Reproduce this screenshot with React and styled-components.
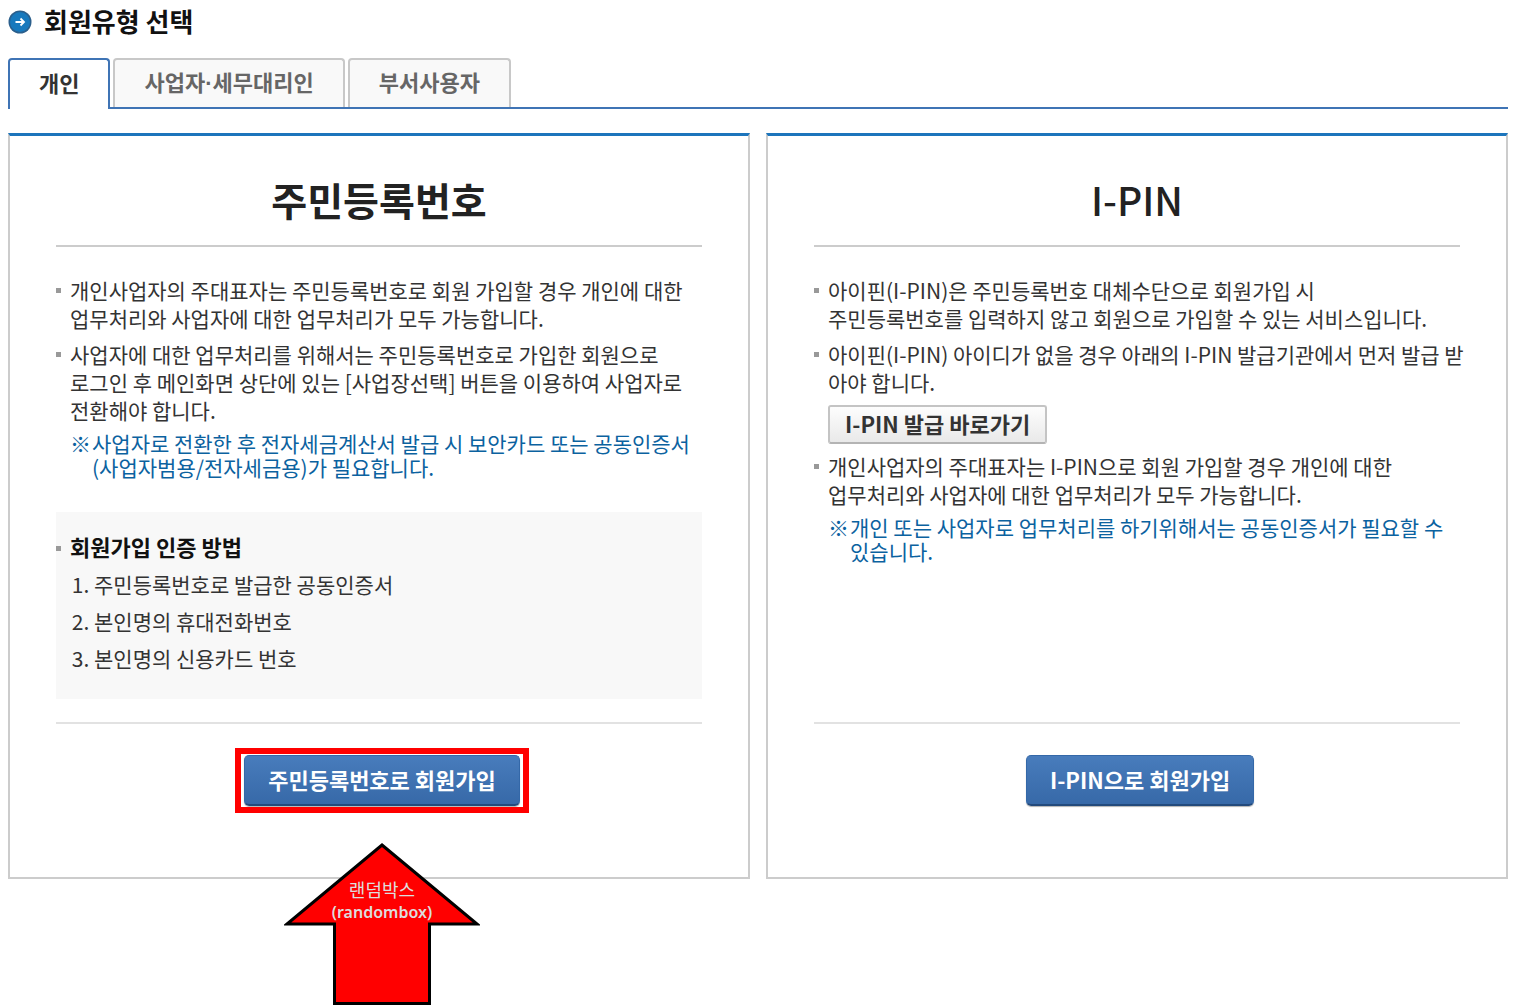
import { useState } from "react";
import styled, { createGlobalStyle } from "styled-components";

const GlobalStyle = createGlobalStyle`
  * {
    box-sizing: border-box;
  }
  body {
    margin: 0;
    background: #fff;
    color: #333;
    font-family: "Noto Sans CJK KR", sans-serif;
    font-size: 21px;
    line-height: 28px;
    word-break: keep-all;
  }
  button {
    font-family: inherit;
    cursor: pointer;
  }
`;

const tabs = ["개인", "사업자·세무대리인", "부서사용자"];

const certMethods = [
  "주민등록번호로 발급한 공동인증서",
  "본인명의 휴대전화번호",
  "본인명의 신용카드 번호",
];

const Page = styled.main`
  min-height: 100vh;
  padding: 6px 10px 0 8px;
`;
const PageTitle = styled.h1`
  display: flex;
  align-items: center;
  gap: 12px;
  height: 32px;
  margin: 0 0 20px;
  color: #111;
  font-size: 26px;
  line-height: 32px;
`;
const PageTitleText = styled.span`
  padding-bottom: 2px;
`;
const TabList = styled.div`
  display: flex;
  gap: 3px;
  height: 51px;
  margin-bottom: 24px;
  box-shadow: inset 0 -2px 0 #3f74b5;
`;
const Tab = styled.button`
  height: ${({ $active }) => ($active ? "51px" : "49px")};
  padding: 0 29px;
  border: 2px solid ${({ $active }) => ($active ? "#3f74b5" : "#c8c8c8")};
  border-bottom: none;
  border-radius: 4px 4px 0 0;
  background: ${({ $active }) => ($active ? "#fff" : "#f9f9f9")};
  color: ${({ $active }) => ($active ? "#333" : "#666")};
  font-family: "Liberation Sans", "Noto Sans CJK KR", sans-serif;
  font-size: 22px;
  font-weight: 700;
  line-height: 28px;
`;
const Cards = styled.div`
  display: grid;
  grid-template-columns: repeat(2, minmax(0, 1fr));
  gap: 16px;
`;
const Card = styled.section`
  display: flex;
  flex-direction: column;
  padding: 32px 46px 71px;
  border: 2px solid #ccc;
  border-top: 3px solid #1c75bc;
`;
const CardTitle = styled.h2`
  margin: 0 0 29px;
  padding: 5px 0 20px;
  border-bottom: 2px solid #ccc;
  color: #222;
  font-size: 39px;
  line-height: 52px;
  text-align: center;
`;
const IpinTitle = styled(CardTitle)`
  font-weight: 500;
`;
const List = styled.ul`
  display: flex;
  flex-direction: column;
  gap: 8px;
  margin: 0;
  padding: 0;
  list-style: none;
`;
const Item = styled.li`
  display: grid;
  grid-template-columns: 5px 1fr;
  column-gap: 9px;
  white-space: nowrap;

  &::before {
    content: "";
    width: 5px;
    height: 5px;
    margin-top: 12px;
    background: #999;
  }
`;
const Note = styled.p`
  display: grid;
  grid-template-columns: 20px 1fr;
  column-gap: 2px;
  margin: 7px 0 0;
  color: #0b62a0;
  line-height: 24px;
`;
const MethodBox = styled.div`
  margin: 33px 0 23px;
  padding: 22px 0;
  background: #f8f8f8;
`;
const MethodTitle = styled.h3`
  margin: 0;
  color: #111;
  font-size: 22px;
  line-height: 24px;
`;
const MethodList = styled.ol`
  margin: 8px 0 0;
  padding: 0 0 0 38px;
  line-height: 37px;
`;
const Footer = styled.div`
  display: flex;
  justify-content: center;
  margin-top: auto;
  padding: 31px 0 0 6px;
  border-top: 2px solid #e2e2e2;
`;
const SmallButton = styled.button`
  display: block;
  height: 39px;
  margin: 9px 0 0;
  padding: 0 15px 3px;
  border: 2px solid #c4c4c4;
  border-bottom-color: #b4b4b4;
  border-radius: 3px;
  background: linear-gradient(#fdfdfd, #e9e9e9);
  color: #333;
  font-size: 22px;
  font-weight: 700;
  line-height: 28px;
`;
const JoinButton = styled.button`
  height: 51px;
  padding: 0 23px 3px;
  border: 1px solid #3468a8;
  border-bottom: 2px solid #234a7c;
  border-radius: 5px;
  background: linear-gradient(#487cbc, #3769a8);
  box-shadow: 0 1px 1px rgba(0, 0, 0, 0.3);
  color: #fff;
  font-size: 22px;
  font-weight: 700;
  line-height: 28px;
`;
const Highlight = styled.div`
  position: relative;

  &::before {
    content: "";
    position: absolute;
    inset: -7px -9px;
    border: 6px solid #f00;
    pointer-events: none;
  }
`;
const Pointer = styled.div`
  position: absolute;
  top: 88px;
  left: 50%;
  width: 196px;
  height: 162px;
  margin-left: -98px;
`;
const PointerLabel = styled.p`
  position: absolute;
  top: 35px;
  left: 0;
  width: 100%;
  margin: 0;
  color: #ddd;
  font-size: 18px;
  line-height: 22px;
  text-align: center;
`;
const LatinName = styled.strong`
  display: block;
  font-family: "Noto Sans", sans-serif;
  font-size: 16px;
  font-weight: 600;
  line-height: 24px;
`;

const ArrowBadge = () => (
  <svg width="24" height="24" viewBox="0 0 24 24" aria-hidden="true">
    <circle cx="12" cy="12" r="11.5" fill="#2b5f8c" />
    <circle cx="12" cy="12" r="10" fill="#1879bd" />
    <path
      d="M7.500 12h8M12.500 8.500l3.500 3.500-3.500 3.500"
      fill="none"
      stroke="#fff"
      strokeWidth="1.8"
    />
  </svg>
);

const UpArrow = () => (
  <svg width="196" height="162" viewBox="0 0 196 162" aria-hidden="true">
    <path
      d="M98 2L193 81H145.500V160.500H50.500V81H3Z"
      fill="#f00"
      stroke="#000"
      strokeWidth="3"
    />
  </svg>
);

function App() {
  const [active, setActive] = useState(0);

  return (
    <Page>
      <GlobalStyle />
      <PageTitle>
        <ArrowBadge />
        <PageTitleText>회원유형 선택</PageTitleText>
      </PageTitle>
      <TabList role="tablist">
        {tabs.map((tab, index) => (
          <Tab
            key={tab}
            type="button"
            role="tab"
            aria-selected={active === index}
            $active={active === index}
            onClick={() => setActive(index)}
          >
            {tab}
          </Tab>
        ))}
      </TabList>
      <Cards>
        <Card>
          <CardTitle>주민등록번호</CardTitle>
          <List>
            <Item>
              <div>
                개인사업자의 주대표자는 주민등록번호로 회원 가입할 경우 개인에
                대한
                <br />
                업무처리와 사업자에 대한 업무처리가 모두 가능합니다.
              </div>
            </Item>
            <Item>
              <div>
                사업자에 대한 업무처리를 위해서는 주민등록번호로 가입한 회원으로
                <br />
                로그인 후 메인화면 상단에 있는 [사업장선택] 버튼을 이용하여
                사업자로
                <br />
                전환해야 합니다.
                <Note>
                  <span>※</span>
                  <span>
                    사업자로 전환한 후 전자세금계산서 발급 시 보안카드 또는
                    공동인증서
                    <br />
                    (사업자범용/전자세금용)가 필요합니다.
                  </span>
                </Note>
              </div>
            </Item>
          </List>
          <MethodBox>
            <Item as="div">
              <MethodTitle>회원가입 인증 방법</MethodTitle>
            </Item>
            <MethodList>
              {certMethods.map((method) => (
                <li key={method}>{method}</li>
              ))}
            </MethodList>
          </MethodBox>
          <Footer>
            <Highlight>
              <JoinButton type="button">주민등록번호로 회원가입</JoinButton>
              <Pointer>
                <UpArrow />
                <PointerLabel>
                  랜덤박스
                  <LatinName>(randombox)</LatinName>
                </PointerLabel>
              </Pointer>
            </Highlight>
          </Footer>
        </Card>
        <Card>
          <IpinTitle>I-PIN</IpinTitle>
          <List>
            <Item>
              <div>
                아이핀(I-PIN)은 주민등록번호 대체수단으로 회원가입 시
                <br />
                주민등록번호를 입력하지 않고 회원으로 가입할 수 있는
                서비스입니다.
              </div>
            </Item>
            <Item>
              <div>
                아이핀(I-PIN) 아이디가 없을 경우 아래의 I-PIN 발급기관에서 먼저
                발급 받<br />
                아야 합니다.
                <SmallButton type="button">I-PIN 발급 바로가기</SmallButton>
              </div>
            </Item>
            <Item>
              <div>
                개인사업자의 주대표자는 I-PIN으로 회원 가입할 경우 개인에 대한
                <br />
                업무처리와 사업자에 대한 업무처리가 모두 가능합니다.
                <Note>
                  <span>※</span>
                  <span>
                    개인 또는 사업자로 업무처리를 하기위해서는 공동인증서가
                    필요할 수<br />
                    있습니다.
                  </span>
                </Note>
              </div>
            </Item>
          </List>
          <Footer>
            <JoinButton type="button">I-PIN으로 회원가입</JoinButton>
          </Footer>
        </Card>
      </Cards>
    </Page>
  );
}

export default App;
